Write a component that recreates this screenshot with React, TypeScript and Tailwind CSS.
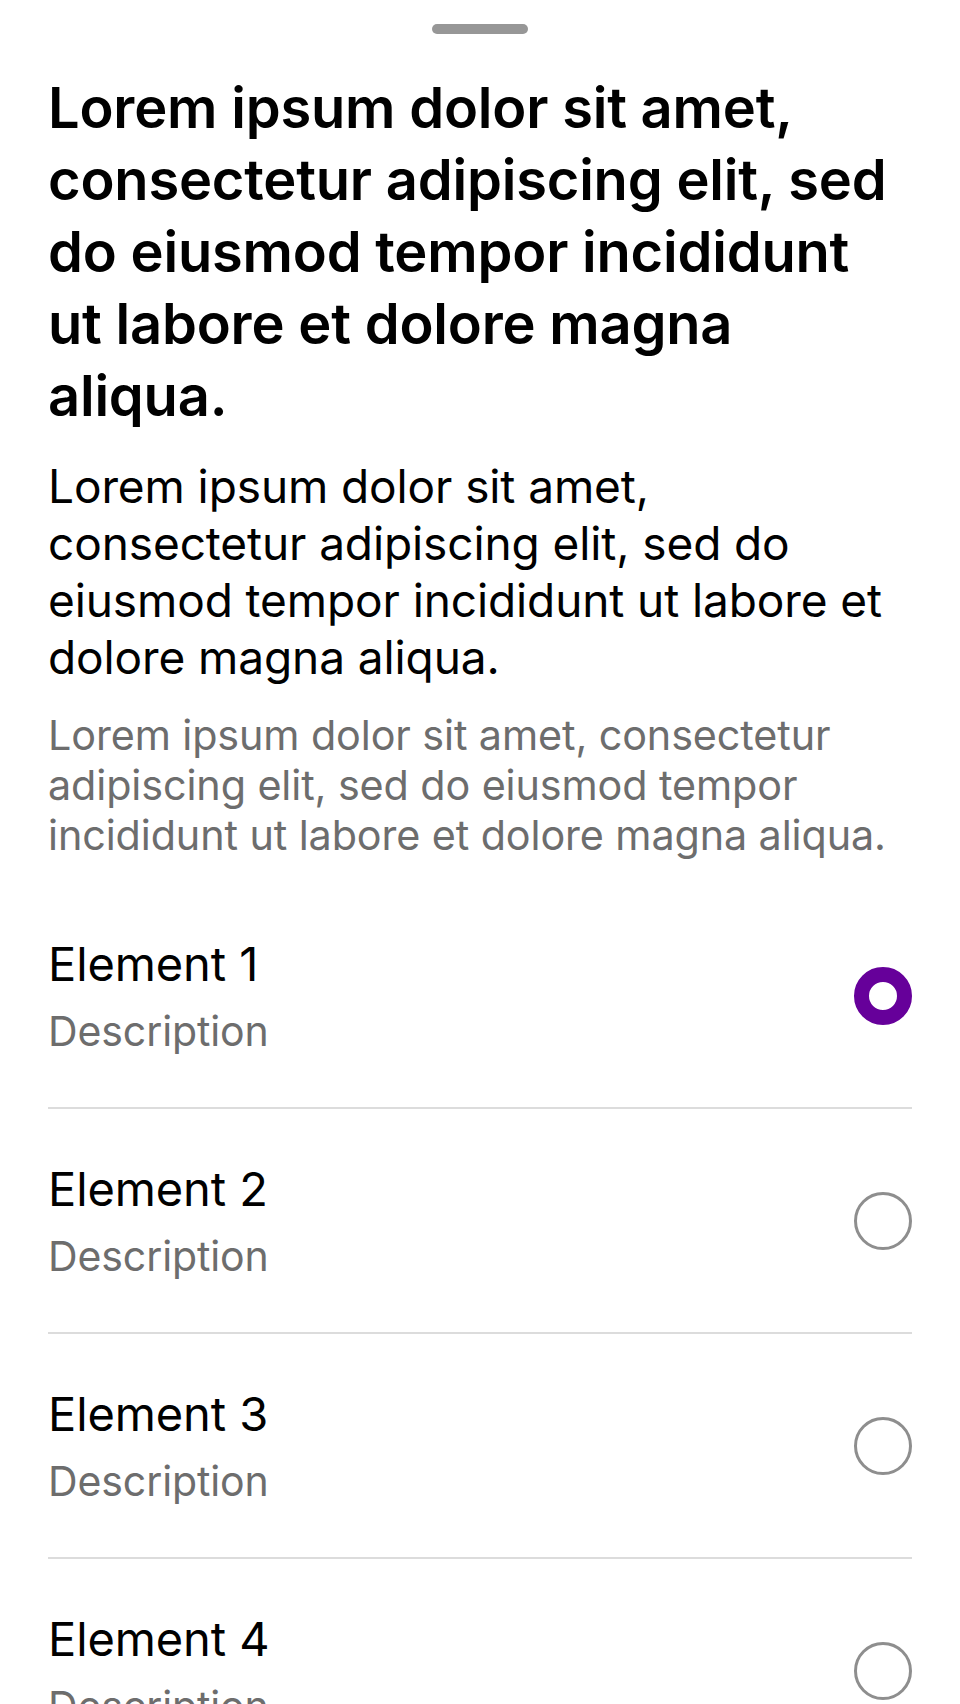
import React from "react";

const items = [
  { title: "Element 1", selected: true },
  { title: "Element 2", selected: false },
  { title: "Element 3", selected: false },
  { title: "Element 4", selected: false },
];

export default function App() {
  return (
    <div
      className="w-[960px] h-[1704px] overflow-hidden bg-white text-black"
      style={{ fontFamily: "Inter, 'Noto Sans', sans-serif" }}
    >
      <div className="flex justify-center pt-[24px]">
        <div className="h-[10px] w-[96px] rounded-full bg-[#979797]" />
      </div>
      <div className="px-[48px]">
        <h1 className="mt-[38px] text-[56px] leading-[72px] font-semibold tracking-[-0.2px]">
          Lorem ipsum dolor sit amet, consectetur adipiscing elit, sed do eiusmod tempor incididunt ut labore et dolore magna aliqua.
        </h1>
        <p className="mt-[26px] text-[46px] leading-[57px] tracking-[-0.1px]">
          Lorem ipsum dolor sit amet, consectetur adipiscing elit, sed do eiusmod tempor incididunt ut labore et dolore magna aliqua.
        </p>
        <p className="mt-[24px] text-[41.3px] leading-[50px] text-[#6d6d6d] tracking-[-0.1px]">
          Lorem ipsum dolor sit amet, consectetur adipiscing elit, sed do eiusmod tempor incididunt ut labore et dolore magna aliqua.
        </p>
        <ul className="mt-[24px]">
          {items.map((it, i) => (
            <li
              key={it.title}
              className={
                "flex h-[223px] items-center justify-between " +
                (i < items.length - 1 ? "border-b-2 border-[#dcdcdc] box-content" : "")
              }
            >
              <div className="flex flex-col">
                <span className="text-[47px] leading-[57px] tracking-[-0.1px]">{it.title}</span>
                <span className="mt-[14px] text-[41px] leading-[50px] text-[#6d6d6d] tracking-[-0.1px]">
                  Description
                </span>
              </div>
              {it.selected ? (
                <div className="h-[58px] w-[58px] rounded-full border-[15px] border-[#66009a] box-border" />
              ) : (
                <div className="h-[58px] w-[58px] rounded-full border-[3px] border-[#8e8e8e] box-border" />
              )}
            </li>
          ))}
        </ul>
      </div>
    </div>
  );
}
